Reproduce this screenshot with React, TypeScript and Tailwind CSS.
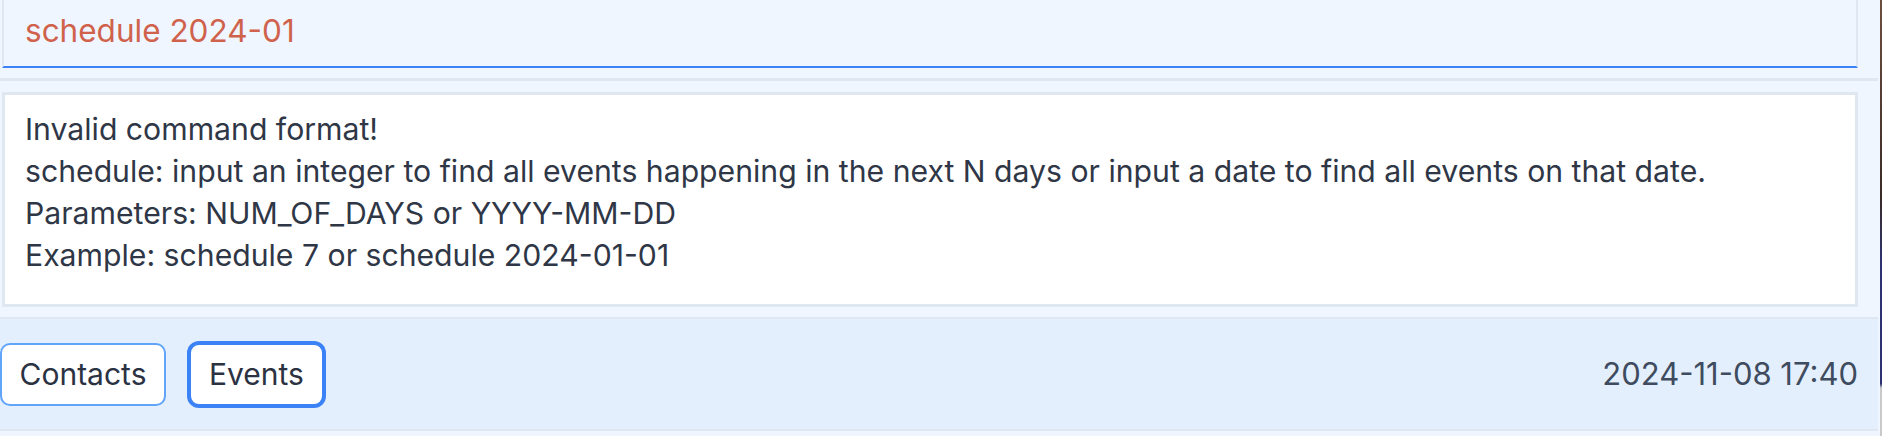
import React from 'react'

const helpLines = [
  'Invalid command format!',
  'schedule: input an integer to find all events happening in the next N days or input a date to find all events on that date.',
  'Parameters: NUM_OF_DAYS or YYYY-MM-DD',
  'Example: schedule 7 or schedule 2024-01-01',
]

export default function App() {
  return (
    <div className="flex h-[436px] w-[1882px] overflow-hidden bg-[#eff6ff] font-[family-name:Inter,sans-serif]">
      <div className="flex flex-1 flex-col">
        {/* command input */}
        <div className="ml-[2px] mr-[22px] flex h-[68px] items-center border-x-2 border-b-2 border-x-[#dfe7f0] border-b-[#3b82f6] pb-[4px] pl-[21px] text-[31.5px] text-[#d0624c]">
          schedule 2024-01
        </div>

        <div className="mr-[2px] mt-[10px] h-[3px] bg-[#dfe7f0]" />

        {/* output */}
        <div className="ml-[2px] mr-[22px] mt-[11px] h-[215px] border-[3px] border-[#dfe7f0] bg-white pl-[20px] pt-[13px] text-[30.2px] leading-[42px] text-[#2f3747]">
          {helpLines.map((line) => (
            <div key={line}>{line}</div>
          ))}
        </div>

        <div className="mr-[2px] mt-[10px] h-[2px] bg-[#dfe7f0]" />

        {/* footer */}
        <div className="mr-[2px] flex h-[110px] items-center justify-between bg-[#e3effd] pr-[20px]">
          <div className="flex items-center gap-[23px]">
            <button className="flex h-[63px] w-[166px] items-center justify-center rounded-[10px] border-2 border-[#60a5fa] bg-white text-[30px] text-[#2b3242]">
              Contacts
            </button>
            <button className="flex h-[63px] w-[135px] items-center justify-center rounded-[10px] border-2 border-[#3b82f6] bg-white text-[30px] text-[#2b3242] ring-2 ring-[#3b82f6]">
              Events
            </button>
          </div>
          <span className="text-[31px] text-[#3f4b5e]">2024-11-08 17:40</span>
        </div>

        <div className="mr-[2px] h-[2px] bg-[#dfe7f0]" />
      </div>
      <div className="w-[2px] bg-[linear-gradient(to_bottom,#6e4e3e_0%,#3b2b26_45%,#2c3270_60%,#2c3270_88%,#c9c9c9_89%)]" />
    </div>
  )
}
